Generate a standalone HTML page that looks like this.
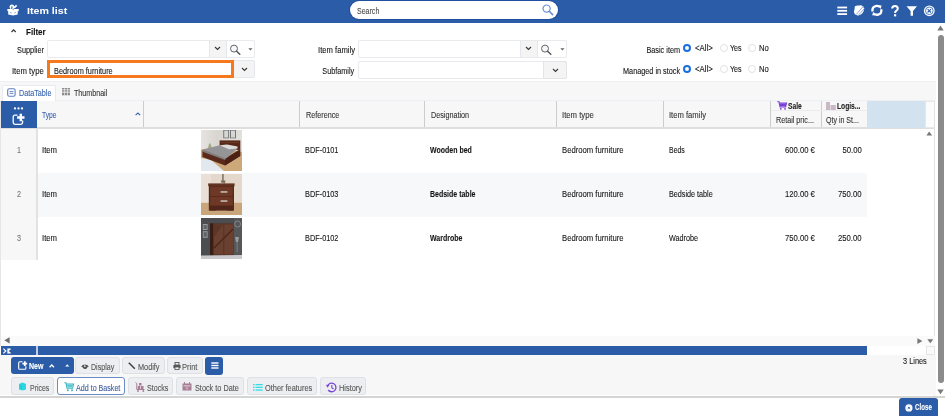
<!DOCTYPE html>
<html><head><meta charset="utf-8">
<style>
*{margin:0;padding:0;box-sizing:border-box}
html,body{width:945px;height:416px;overflow:hidden;background:#fff;font-family:"Liberation Sans",sans-serif;font-size:8.7px;color:#151515}
.a{position:absolute}
svg{position:absolute;overflow:visible}
.t{position:absolute;white-space:nowrap;line-height:10px;-webkit-text-stroke-width:.1px;transform:scaleX(.83);transform-origin:0 50%}
.r{position:absolute;white-space:nowrap;line-height:10px;-webkit-text-stroke-width:.1px;transform:scaleX(.83);transform-origin:100% 50%;text-align:right}
.b{font-weight:bold}
.inp{position:absolute;background:#fff;border:1px solid #e8eaee;border-radius:2px}
.ddb{position:absolute;background:#f4f4f4;border-left:1px solid #e4e7eb}
.radio{position:absolute;width:8px;height:8px;border-radius:50%;border:1px solid #dfe2e6;background:#fff}
.radio.on{border:2px solid #1a6fe0}
.sep{position:absolute;top:101px;width:1px;height:26px;background:#cdcdcd}
.btn{position:absolute;background:#eceef1;border:1px solid #dde0e4;border-radius:3px}
.blue{background:#2a5ca8}
</style></head><body>
<!-- ================= HEADER ================= -->
<div class="a blue" style="left:0;top:0;width:945px;height:23px"></div>
<svg style="left:0;top:0" width="22" height="22" viewBox="0 0 22 22">
 <path d="M10.9 8.6 Q9.4 5.6 11.9 5.4 Q13.9 5.4 13.2 8 Q15.2 7.4 16.6 5.3" fill="none" stroke="#fff" stroke-width="1.6"/>
 <path d="M7.3 9 L12.4 8.9 L13.1 9.9 L13.8 8.9 L18.8 9 L18.6 11.2 L7.5 11.2 Z" fill="#fff"/>
 <path d="M8.2 11 L17.7 11 L17.7 14.6 L13 15.5 L8.2 14.6 Z" fill="#fff"/>
 <path d="M10.2 12.6 L11.4 12.9 M14.6 12.9 L15.8 12.6" stroke="#2a5ca8" stroke-width=".7"/>
</svg>
<div class="a b" style="left:26.6px;top:4.5px;font-size:9.6px;line-height:12px;color:#fff;white-space:nowrap;transform:scaleX(1.11);transform-origin:0 50%">Item list</div>
<div class="a" style="left:350px;top:1px;width:208px;height:18px;background:#fff;border-radius:9px;box-shadow:0 0 0 1px #1f4f9e"></div>
<div class="t" style="transform:scaleX(0.81);left:356.5px;top:5.7px;color:#4a4a4a">Search</div>
<svg style="left:542px;top:4px" width="12" height="12" viewBox="0 0 12 12">
 <circle cx="4.6" cy="4.6" r="3.6" fill="none" stroke="#6a8fcf" stroke-width="1.2"/>
 <path d="M7.3 7.3 L10.6 10.6" stroke="#6a8fcf" stroke-width="1.6" stroke-linecap="round"/>
</svg>
<!-- header icons -->
<svg style="left:837px;top:6px" width="11" height="10" viewBox="0 0 11 10">
 <rect x="0.3" y="0.6" width="9.8" height="1.8" fill="#fff"/><rect x="0.3" y="3.9" width="9.8" height="1.8" fill="#fff"/><rect x="0.3" y="7.2" width="9.8" height="1.8" fill="#fff"/>
</svg>
<svg style="left:850px;top:0" width="36" height="22" viewBox="850 0 36 22">
 <ellipse cx="859" cy="10.4" rx="4.4" ry="5.6" transform="rotate(45 859 10.4)" fill="#fff"/>
 <ellipse cx="857.6" cy="8" rx="3" ry="2.4" fill="#fff"/>
 <path d="M856 14.6 L863.6 6 M858.2 15.4 L864.6 8.4" stroke="#7f9fd4" stroke-width=".9"/>
 <path d="M872.6 11.6 Q871.6 7.2 875.6 6.1 Q878.4 5.4 880 7.2" fill="none" stroke="#fff" stroke-width="2.3"/>
 <path d="M878.4 5.2 L881.6 5.6 L880.6 9 Z" fill="#fff"/>
 <path d="M881.2 9.2 Q882.2 13.6 878.2 14.6 Q875.2 15.2 873.8 13.4" fill="none" stroke="#fff" stroke-width="2.3"/>
 <path d="M875.4 15.6 L872.2 15.2 L873.2 11.8 Z" fill="#fff"/>
</svg>
<svg style="left:890.5px;top:5px" width="8" height="12" viewBox="0 0 8 12">
 <path d="M1.2 3.6 Q1.2 0.9 4 0.9 Q6.8 0.9 6.8 3.4 Q6.8 4.9 5.2 5.8 Q4.1 6.5 4.1 8" fill="none" stroke="#fff" stroke-width="2"/>
 <rect x="3" y="9.2" width="2.2" height="2.2" fill="#fff"/>
</svg>
<svg style="left:906px;top:6px" width="12" height="10" viewBox="0 0 12 10">
 <path d="M0.5 0.3 L11 0.3 L7 5 L7 9.8 L4.6 9.8 L4.6 5 Z" fill="#fff"/>
</svg>
<svg style="left:923px;top:5px" width="13" height="12" viewBox="0 0 13 12">
 <circle cx="6.3" cy="5.8" r="5.4" fill="#fff"/>
 <circle cx="6.3" cy="5.8" r="3.8" fill="none" stroke="#2a5ca8" stroke-width=".8"/>
 <path d="M4.6 4.1 L8 7.5 M8 4.1 L4.6 7.5" stroke="#2a5ca8" stroke-width="1.1"/>
</svg>

<!-- ================= FILTER ================= -->
<svg style="left:11px;top:29px" width="6" height="4" viewBox="0 0 6 4"><path d="M0.5 3 L2.6 0.8 L4.7 3" fill="none" stroke="#333" stroke-width="1.2"/></svg>
<div class="t b" style="transform:scaleX(0.93);left:26.3px;top:26.8px">Filter</div>

<div class="r" style="transform:scaleX(0.84);right:901.2px;top:45px">Supplier</div>
<div class="inp" style="left:47px;top:40px;width:208px;height:18px"></div>
<div class="ddb" style="left:209px;top:41px;width:17px;height:16px"></div>
<div class="a" style="left:226px;top:41px;width:1px;height:16px;background:#e4e7eb"></div>
<svg style="left:214px;top:46px" width="7" height="5" viewBox="0 0 7 5"><path d="M1 1 L3.5 3.5 L6 1" fill="none" stroke="#3a3a3a" stroke-width="1.15"/></svg>
<svg style="left:229px;top:44px" width="13" height="12" viewBox="0 0 13 12"><circle cx="5" cy="4.6" r="3.5" fill="#f4f7fb" stroke="#555" stroke-width=".9"/><path d="M7.6 7.3 L10.8 10.3" stroke="#555" stroke-width="1.5" stroke-linecap="round"/></svg>
<svg style="left:248px;top:48px" width="5" height="3" viewBox="0 0 5 3"><path d="M0.3 0.3 L4.5 0.3 L2.4 2.4 Z" fill="#666"/></svg>

<div class="r" style="transform:scaleX(0.89);right:901.2px;top:66px">Item type</div>
<div class="a" style="left:47px;top:60px;width:187px;height:18px;border:3px solid #f6791e;background:#fff"></div>
<div class="t" style="transform:scaleX(0.844);left:53.8px;top:65.9px">Bedroom furniture</div>
<div class="a" style="left:234px;top:60px;width:21px;height:18px;background:#f4f4f4;border:1px solid #e4e7eb;border-left:none;border-radius:0 2px 2px 0"></div>
<svg style="left:241px;top:67px" width="7" height="5" viewBox="0 0 7 5"><path d="M1 1 L3.5 3.5 L6 1" fill="none" stroke="#3a3a3a" stroke-width="1.15"/></svg>

<div class="r" style="transform:scaleX(0.88);right:590.4px;top:45px">Item family</div>
<div class="inp" style="left:358px;top:40px;width:208.5px;height:18px"></div>
<div class="ddb" style="left:520px;top:41px;width:17px;height:16px"></div>
<div class="a" style="left:537px;top:41px;width:1px;height:16px;background:#e4e7eb"></div>
<svg style="left:525px;top:46px" width="7" height="5" viewBox="0 0 7 5"><path d="M1 1 L3.5 3.5 L6 1" fill="none" stroke="#3a3a3a" stroke-width="1.15"/></svg>
<svg style="left:540px;top:44px" width="13" height="12" viewBox="0 0 13 12"><circle cx="5" cy="4.6" r="3.5" fill="#f4f7fb" stroke="#555" stroke-width=".9"/><path d="M7.6 7.3 L10.8 10.3" stroke="#555" stroke-width="1.5" stroke-linecap="round"/></svg>
<svg style="left:559.5px;top:48px" width="5" height="3" viewBox="0 0 5 3"><path d="M0.3 0.3 L4.5 0.3 L2.4 2.4 Z" fill="#666"/></svg>

<div class="r" style="transform:scaleX(0.834);right:590.4px;top:66px">Subfamily</div>
<div class="inp" style="left:358px;top:61px;width:208.5px;height:17.5px"></div>
<div class="a" style="left:543px;top:61px;width:23.5px;height:17.5px;background:#f4f4f4;border:1px solid #e2e4e8;border-radius:0 2px 2px 0"></div>
<svg style="left:551.5px;top:67.5px" width="7" height="5" viewBox="0 0 7 5"><path d="M1 1 L3.5 3.5 L6 1" fill="none" stroke="#3a3a3a" stroke-width="1.15"/></svg>

<div class="r" style="transform:scaleX(0.84);right:264.9px;top:44.7px">Basic item</div>
<div class="radio on" style="left:683.2px;top:44.3px"></div>
<div class="t" style="transform:scaleX(0.9);left:694.6px;top:43.3px">&lt;All&gt;</div>
<div class="radio" style="left:719.5px;top:44.3px"></div>
<div class="t" style="transform:scaleX(0.82);left:730.3px;top:43.3px">Yes</div>
<div class="radio" style="left:748.4px;top:44.3px"></div>
<div class="t" style="transform:scaleX(0.88);left:759.4px;top:43.3px">No</div>

<div class="r" style="transform:scaleX(0.838);right:265px;top:65.6px">Managed in stock</div>
<div class="radio on" style="left:683.2px;top:65.3px"></div>
<div class="t" style="transform:scaleX(0.9);left:694.6px;top:64.3px">&lt;All&gt;</div>
<div class="radio" style="left:719.5px;top:65.3px"></div>
<div class="t" style="transform:scaleX(0.82);left:730.3px;top:64.3px">Yes</div>
<div class="radio" style="left:748.4px;top:65.3px"></div>
<div class="t" style="transform:scaleX(0.88);left:759.4px;top:64.3px">No</div>

<!-- ================= TAB BAR ================= -->
<div class="a" style="left:0;top:81px;width:936px;height:20px;background:#f7f7f7;border-top:1px solid #eef0f3"></div>
<div class="a" style="left:1px;top:100px;width:934px;height:1px;background:#eceff3"></div>
<div class="a" style="left:1.5px;top:85px;width:54px;height:16px;background:#fff;border:1px solid #e8eaee;border-bottom:none;border-radius:2px 2px 0 0"></div>
<svg style="left:7px;top:87.5px" width="9" height="9" viewBox="0 0 9 9"><rect x="0.7" y="0.7" width="7.4" height="7.6" rx="1.6" fill="none" stroke="#5b7fc0" stroke-width="1.1"/><path d="M2.5 3.6 H6.4 M2.5 5.4 H6.4" stroke="#5b7fc0" stroke-width=".9"/></svg>
<div class="t" style="transform:scaleX(0.83);left:18.6px;top:87.6px;color:#3762ae">DataTable</div>
<svg style="left:62px;top:88.3px" width="8" height="8" viewBox="0 0 8 8" fill="#8d8d8d"><rect x="0" y="0" width="2.3" height="1.5"/><rect x="2.85" y="0" width="2.3" height="1.5"/><rect x="5.7" y="0" width="2.3" height="1.5"/><rect x="0" y="2.2" width="2.3" height="1.5"/><rect x="2.85" y="2.2" width="2.3" height="1.5"/><rect x="5.7" y="2.2" width="2.3" height="1.5"/><rect x="0" y="4.6" width="2.3" height="2.7"/><rect x="2.85" y="4.6" width="2.3" height="2.7"/><rect x="5.7" y="4.6" width="2.3" height="2.7"/></svg>
<div class="t" style="transform:scaleX(0.82);left:73.8px;top:87.6px;color:#333">Thumbnail</div>

<!-- ================= TABLE ================= -->
<div class="a" style="left:0;top:101px;width:1px;height:245px;background:#e6e6e6"></div>
<div class="a" style="left:1px;top:101px;width:934px;height:27px;background:#f7f7f7"></div>
<div class="a" style="left:1px;top:127px;width:934px;height:2px;background:#dedede"></div>
<div class="a blue" style="left:1px;top:101px;width:36px;height:27px"></div>
<svg style="left:12px;top:106px" width="14" height="20" viewBox="0 0 14 20">
 <circle cx="3" cy="2.4" r="1.15" fill="#fff"/><circle cx="6.5" cy="2.4" r="1.15" fill="#fff"/><circle cx="10" cy="2.4" r="1.15" fill="#fff"/>
 <path d="M5.5 9.2 L3 9.2 Q1.2 9.2 1.2 11 L1.2 16.6 Q1.2 18.4 3 18.4 L8.8 18.4 Q10.6 18.4 10.6 16.6 L10.6 14.5" fill="none" stroke="#fff" stroke-width="1.3"/>
 <path d="M8.8 7.8 V15.2 M5.1 11.5 H12.5" stroke="#fff" stroke-width="2.4"/>
</svg>
<div class="sep" style="left:143px"></div>
<div class="sep" style="left:299px"></div>
<div class="sep" style="left:424px"></div>
<div class="sep" style="left:556px"></div>
<div class="sep" style="left:662.5px"></div>
<div class="sep" style="left:770px"></div>
<div class="sep" style="left:820.5px"></div>
<div class="a" style="left:771px;top:110px;width:96px;height:1px;background:#ececec"></div>
<div class="a" style="left:867px;top:101px;width:58px;height:26.5px;background:#d2e2ef"></div>
<div class="a" style="left:925px;top:101px;width:10px;height:27px;background:#fcfcfc;border:1px solid #e8e8e8"></div>

<div class="t" style="transform:scaleX(0.77);left:42.4px;top:110px;color:#3a62b2">Type</div>
<svg style="left:134.5px;top:112px" width="6" height="4" viewBox="0 0 6 4"><path d="M0.6 3.2 L2.9 1 L5.2 3.2" fill="none" stroke="#3a62b2" stroke-width="1.1"/></svg>
<div class="t" style="transform:scaleX(0.83);left:305.5px;top:110px;color:#333">Reference</div>
<div class="t" style="transform:scaleX(0.83);left:430.5px;top:110px;color:#333">Designation</div>
<div class="t" style="transform:scaleX(0.89);left:562px;top:110px;color:#333">Item type</div>
<div class="t" style="transform:scaleX(0.88);left:668.7px;top:110px;color:#333">Item family</div>
<svg style="left:776.5px;top:101px" width="10" height="9" viewBox="0 0 10 9"><path d="M0.3 0.8 L2 0.8 L3 6 L8.6 6 L9.6 2 L2.4 2" fill="none" stroke="#7a3fd8" stroke-width="1.1"/><rect x="3" y="2.4" width="6" height="3" fill="#7a3fd8"/><circle cx="3.8" cy="7.8" r="0.9" fill="#7a3fd8"/><circle cx="8" cy="7.8" r="0.9" fill="#7a3fd8"/></svg>
<div class="t b" style="transform:scaleX(0.77);left:787.8px;top:100.5px;color:#222">Sale</div>
<div class="t" style="transform:scaleX(0.827);left:775.5px;top:114.5px;color:#333">Retail pric...</div>
<svg style="left:825.5px;top:102px" width="10" height="8" viewBox="0 0 10 8" fill="#c9b9c6"><rect x="0" y="0" width="4" height="8"/><rect x="4.5" y="3" width="5.3" height="5"/></svg>
<div class="t b" style="transform:scaleX(0.77);left:837.3px;top:100.5px;color:#222">Logis...</div>
<div class="t" style="transform:scaleX(0.81);left:825.5px;top:114.5px;color:#333">Qty in St...</div>

<!-- rows -->
<div class="a" style="left:1px;top:129px;width:35px;height:131px;background:#f7f7f7"></div>
<div class="a" style="left:36px;top:129px;width:1.5px;height:131px;background:#e2e2e2"></div>
<div class="a" style="left:37.5px;top:172.5px;width:829.5px;height:44.3px;background:#f7f8fa"></div>

<div class="t" style="left:17px;top:145px;color:#777">1</div>
<div class="t" style="left:17px;top:188.5px;color:#777">2</div>
<div class="t" style="left:17px;top:232.5px;color:#777">3</div>

<div class="t" style="transform:scaleX(0.89);left:42.4px;top:145px">Item</div>
<div class="t" style="transform:scaleX(0.89);left:42.4px;top:188.5px">Item</div>
<div class="t" style="transform:scaleX(0.89);left:42.4px;top:232.5px">Item</div>

<div class="t" style="transform:scaleX(0.845);left:305.2px;top:145px">BDF-0101</div>
<div class="t" style="transform:scaleX(0.845);left:305.2px;top:188.5px">BDF-0103</div>
<div class="t" style="transform:scaleX(0.845);left:305.2px;top:232.5px">BDF-0102</div>

<div class="t b" style="transform:scaleX(0.805);left:430px;top:145px">Wooden bed</div>
<div class="t b" style="transform:scaleX(0.805);left:430px;top:188.5px">Bedside table</div>
<div class="t b" style="transform:scaleX(0.805);left:430px;top:232.5px">Wardrobe</div>

<div class="t" style="transform:scaleX(0.886);left:561.6px;top:145px">Bedroom furniture</div>
<div class="t" style="transform:scaleX(0.886);left:561.6px;top:188.5px">Bedroom furniture</div>
<div class="t" style="transform:scaleX(0.886);left:561.6px;top:232.5px">Bedroom furniture</div>

<div class="t" style="transform:scaleX(0.8);left:669px;top:145px">Beds</div>
<div class="t" style="transform:scaleX(0.83);left:669px;top:188.5px">Bedside table</div>
<div class="t" style="transform:scaleX(0.83);left:669px;top:232.5px">Wadrobe</div>

<div class="r" style="transform:scaleX(0.88);right:130.3px;top:145px">600.00 €</div>
<div class="r" style="transform:scaleX(0.88);right:130.3px;top:188.5px">120.00 €</div>
<div class="r" style="transform:scaleX(0.88);right:130.3px;top:232.5px">750.00 €</div>

<div class="r" style="transform:scaleX(0.89);right:83px;top:145px">50.00</div>
<div class="r" style="transform:scaleX(0.89);right:83px;top:188.5px">750.00</div>
<div class="r" style="transform:scaleX(0.89);right:83px;top:232.5px">250.00</div>

<!-- images -->
<svg style="left:201px;top:130px;filter:blur(.35px)" width="41" height="41" viewBox="0 0 41 41">
 <defs><linearGradient id="w1" x1="0" x2="1" y1="0" y2="0"><stop offset="0" stop-color="#e6e4e1"/><stop offset="0.4" stop-color="#d9d5d0"/><stop offset="1" stop-color="#e3e0dc"/></linearGradient></defs>
 <rect width="41" height="41" fill="url(#w1)"/>
 <path d="M0 19.5 L18 17 L41 22 L41 41 L0 41 Z" fill="#cda97a"/>
 <path d="M0 28 L10 30 L23 41 L0 41 Z" fill="#e2e8ee"/>
 <rect x="22.3" y="0" width="5.8" height="8.3" fill="#6e6e6e"/><rect x="23.2" y="0.6" width="4" height="7" fill="#d4d8d4"/>
 <rect x="29" y="0" width="6" height="8.3" fill="#6e6e6e"/><rect x="29.9" y="0.6" width="4.2" height="7" fill="#d4d8d4"/>
 <path d="M7 18 Q8.8 8.5 10.8 18 Z" fill="#a3a982"/>
 <rect x="18.6" y="10.4" width="20.7" height="9.5" fill="#572818"/>
 <rect x="20" y="12" width="18" height="1" fill="#6b3624"/>
 <path d="M1.4 20.5 L1.4 27 L24 35.5 L39.2 26 L39.2 19 L24 28.5 Z" fill="#5a2a1b"/>
 <path d="M24 29 L39.2 20.5 L39.2 26 L24 35.5 Z" fill="#4a2114"/>
 <path d="M2 19.5 L18.6 15.3 L36.5 18.5 L25 28.5 Z" fill="#959597"/>
 <path d="M2 19.5 L25 28.5 L24 30 L1.6 21.8 Z" fill="#7e7e80"/>
 <path d="M18.6 15.3 L26 14.6 L36.5 16.4 L36.5 18.5 L28 19.3 Z" fill="#dcdcdc"/>
</svg>
<svg style="left:201px;top:174px;filter:blur(.35px)" width="41" height="41" viewBox="0 0 41 41">
 <rect width="41" height="41" fill="#e4d8cd"/>
 <rect x="0" y="0" width="10" height="41" fill="#eae0d7"/>
 <path d="M0 28.8 L41 28.8 L41 41 L0 41 Z" fill="#c9a57c"/>
 <rect x="21" y="0" width="1.8" height="8" fill="#8e8070"/>
 <path d="M19.8 6.6 L24.6 6.6 L23.8 9.6 L20.6 9.6 Z" fill="#7c6c5c"/>
 <path d="M12 8.8 L22.8 8.8 L22 10.8 L12.8 10.8 Z" fill="#d9d9d6"/>
 <rect x="7.2" y="9.4" width="26.4" height="2.8" fill="#623223"/>
 <rect x="7.8" y="12" width="25.2" height="24.6" fill="#55291b"/>
 <rect x="9.2" y="12.8" width="22.6" height="9.2" fill="#6d3826"/>
 <rect x="9.2" y="22.8" width="22.6" height="9" fill="#6d3826"/>
 <path d="M9 31.8 L32 31.8 L32 36.6 L27 36.6 Q20.5 33.5 14 36.6 L9 36.6 Z" fill="#4f2619"/>
 <rect x="19.6" y="17.2" width="6.8" height="1.5" fill="#c9c3bb"/>
 <rect x="19.6" y="26.3" width="6.8" height="1.5" fill="#c9c3bb"/>
</svg>
<svg style="left:201px;top:218px;filter:blur(.35px)" width="41" height="41" viewBox="0 0 41 41">
 <rect width="41" height="41" fill="#4b4d51"/>
 <rect x="33" y="0" width="8" height="41" fill="#55575b"/>
 <rect x="1.8" y="6" width="4.8" height="6" fill="#9a9ca0"/><rect x="2.6" y="7" width="3.2" height="4" fill="#626468"/>
 <rect x="1.8" y="13.2" width="4.8" height="6.6" fill="#9a9ca0"/><rect x="2.6" y="14.2" width="3.2" height="4.6" fill="#626468"/>
 <circle cx="36.6" cy="6" r="3" fill="none" stroke="#8a8a8c" stroke-width="0.9"/>
 <path d="M34 19 L38 19 L37 24 L35 24 Z" fill="#9a9a9c"/><rect x="35.7" y="24" width=".8" height="10" fill="#8a8a8c"/>
 <rect x="9" y="5.4" width="24" height="31.8" fill="#573224"/>
 <rect x="9" y="5.4" width="3.4" height="31.8" fill="#3a1d14"/>
 <rect x="12.6" y="6.4" width="20" height="30" fill="#6a4030"/>
 <path d="M12.6 6.4 L22 6.4 L12.6 20 Z" fill="#5e3628"/>
 <path d="M13 30 L32 11" stroke="#4a2418" stroke-width="1.2"/>
 <rect x="22.5" y="6.4" width="0.7" height="30" fill="#54291c"/>
 <path d="M0 37.5 L41 37 L41 41 L0 41 Z" fill="#c9c9cb"/>
</svg>

<!-- inner v-scroll up arrow -->
<svg style="left:926px;top:131px" width="7" height="5" viewBox="0 0 7 5"><path d="M0.4 4.4 L3.2 0.4 L6.2 4.4 Z" fill="#777"/></svg>
<div class="a" style="left:934px;top:101px;width:1px;height:295px;background:#e3e3e3"></div>

<!-- h-scroll -->
<div class="a" style="left:1px;top:336px;width:934px;height:10px;background:#fafafa"></div>
<svg style="left:3.6px;top:337.4px" width="6" height="7" viewBox="0 0 6 7"><path d="M5.6 0.2 L0.3 3.3 L5.6 6.4 Z" fill="#6e6e6e"/></svg>
<svg style="left:916.5px;top:337.8px" width="6" height="7" viewBox="0 0 6 7"><path d="M0.4 0.3 L5.4 3.1 L0.4 6 Z" fill="#777"/></svg>
<svg style="left:926.5px;top:338.5px" width="7" height="5" viewBox="0 0 7 5"><path d="M0.3 0.3 L6.3 0.3 L3.3 4.2 Z" fill="#777"/></svg>
<div class="a blue" style="left:1px;top:346px;width:866px;height:8.5px"></div>
<div class="a" style="left:36px;top:346px;width:1.5px;height:8.5px;background:#c0cde0"></div>
<svg style="left:2.5px;top:347.8px" width="8" height="6" viewBox="0 0 8 6"><path d="M0.4 0.6 L2.8 3 L0.4 5.4" fill="none" stroke="#fff" stroke-width="1.2"/><path d="M7.6 0.8 L4.6 3 L7.6 5.2 M4.2 1.1 H7.4 M4.2 4.9 H7.4" fill="none" stroke="#fff" stroke-width="1.1"/></svg>
<div class="a" style="left:926px;top:346px;width:9px;height:8.5px;background:#fafafa;border:1px solid #e6e6e6"></div>

<!-- ================= BUTTON AREA ================= -->
<div class="a" style="left:0;top:354.5px;width:936px;height:40.5px;background:#f7f7f7"></div>
<div class="a" style="left:0;top:396px;width:945px;height:1.5px;background:#d4d4d4"></div>
<div class="t" style="transform:scaleX(0.85);left:902.6px;top:356.3px;color:#222">3 Lines</div>

<div class="a blue" style="left:11.2px;top:357.2px;width:62.6px;height:17.1px;border-radius:3px"></div>
<svg style="left:17.5px;top:360.5px" width="10" height="9" viewBox="0 0 10 9">
 <path d="M4.5 0.8 H1.8 Q0.7 0.8 0.7 1.9 V7.2 Q0.7 8.3 1.8 8.3 H6.8 Q7.9 8.3 7.9 7.2 V5.2" fill="none" stroke="#fff" stroke-width="1.1"/>
 <path d="M6.8 0.3 V5 M4.4 2.6 H9.2" stroke="#fff" stroke-width="1.8"/>
</svg>
<div class="t b" style="transform:scaleX(0.81);left:28.8px;top:360.6px;color:#fff">New</div>
<svg style="left:48.7px;top:364px" width="6" height="4" viewBox="0 0 6 4"><path d="M0.6 3.2 L2.8 1 L5 3.2" fill="none" stroke="#fff" stroke-width="1.3"/></svg>
<svg style="left:64.9px;top:363.8px" width="5" height="3" viewBox="0 0 5 3"><path d="M0.2 2.6 L2.2 0.3 L4.3 2.6 Z" fill="#fff"/></svg>

<div class="btn" style="left:75px;top:357.3px;width:44.5px;height:17.2px"></div>
<svg style="left:80.8px;top:363.5px" width="8" height="6" viewBox="0 0 8 6"><path d="M0.2 2.6 Q1.5 0.4 4 0.4 Q6.6 0.4 7.8 2.6 Q6.2 3.2 5.6 4.6 Q4 5.6 2.6 4.6 Q1.6 3.2 0.2 2.6 Z" fill="#555"/><circle cx="3.8" cy="2.2" r="0.9" fill="#d8d8d8"/></svg>
<div class="t" style="transform:scaleX(0.816);left:90.7px;top:361.9px;color:#555">Display</div>

<div class="btn" style="left:122.3px;top:357.3px;width:42.3px;height:17.2px"></div>
<svg style="left:128px;top:361.5px" width="8" height="8" viewBox="0 0 8 8"><path d="M0.8 0.8 L6.8 6.8" stroke="#444" stroke-width="1.6"/></svg>
<div class="t" style="transform:scaleX(0.84);left:137.8px;top:361.9px;color:#555">Modify</div>

<div class="btn" style="left:167.2px;top:357.3px;width:35.5px;height:17.2px"></div>
<svg style="left:172.5px;top:361.5px" width="8" height="8" viewBox="0 0 8 8"><rect x="2" y="0.5" width="4" height="2.5" fill="none" stroke="#555" stroke-width=".9"/><rect x="0.4" y="3" width="7.2" height="3.2" rx=".6" fill="#555"/><rect x="2" y="5" width="4" height="2.6" fill="#eceef1" stroke="#555" stroke-width=".8"/></svg>
<div class="t" style="transform:scaleX(0.865);left:182px;top:361.9px;color:#555">Print</div>

<div class="a blue" style="left:205.1px;top:356.8px;width:18.4px;height:17.8px;border-radius:3px"></div>
<svg style="left:210.5px;top:362px" width="8" height="7" viewBox="0 0 8 7" fill="#fff"><rect x="0.3" y="0.3" width="7.2" height="1.4"/><rect x="0.3" y="2.8" width="7.2" height="1.4"/><rect x="0.3" y="5.3" width="7.2" height="1.4"/></svg>

<div class="btn" style="left:11.2px;top:377.2px;width:43.1px;height:17.8px"></div>
<svg style="left:18px;top:382px" width="9" height="9" viewBox="0 0 9 9"><path d="M1 2 L4.5 0.6 L8 2 L8 7.6 L4.5 8.6 L1 7.6 Z" fill="#2ad6e0"/><path d="M3.2 3.6 V6.6" stroke="#1bb7c4" stroke-width=".8"/></svg>
<div class="t" style="transform:scaleX(0.8);left:29.8px;top:382.8px;color:#555">Prices</div>

<div class="a" style="left:56.9px;top:377.2px;width:68.6px;height:17.8px;background:#fff;border:1.3px solid #6a8bc6;border-radius:3px"></div>
<svg style="left:63.5px;top:381.5px" width="10" height="10" viewBox="0 0 10 10"><path d="M0.3 0.8 L2 0.8 L3 6.3 L8.6 6.3 L9.6 2 L2.3 2" fill="none" stroke="#3fb4c0" stroke-width="1.1"/><path d="M3 2.4 L9 2.4 L8.3 5.6 L3.5 5.6 Z" fill="#5ec8d0"/><circle cx="3.9" cy="8.3" r="1" fill="#3fb4c0"/><circle cx="8" cy="8.3" r="1" fill="#3fb4c0"/></svg>
<div class="t" style="transform:scaleX(0.82);left:75.9px;top:382.8px;color:#3a5c9e">Add to Basket</div>

<div class="btn" style="left:128.2px;top:377.2px;width:45.1px;height:17.8px"></div>
<svg style="left:134.5px;top:381.5px" width="10" height="10" viewBox="0 0 10 10"><path d="M0.5 0.5 L1.8 1.5 L1.8 7.5 L9.5 7.5" fill="none" stroke="#a87d96" stroke-width="1"/><rect x="4" y="1" width="2.5" height="2.5" fill="#a87d96"/><rect x="2.8" y="4" width="2.5" height="3" fill="#a87d96"/><rect x="6" y="4" width="2.5" height="3" fill="#a87d96"/><circle cx="3" cy="9" r=".9" fill="#a87d96"/><circle cx="8.3" cy="9" r=".9" fill="#a87d96"/></svg>
<div class="t" style="transform:scaleX(0.82);left:146.8px;top:382.8px;color:#555">Stocks</div>

<div class="btn" style="left:176px;top:377.2px;width:68.1px;height:17.8px"></div>
<svg style="left:182px;top:382px" width="10" height="9" viewBox="0 0 10 9"><rect x="0.5" y="1.5" width="9" height="7" fill="#a87d96"/><rect x="1.6" y="3.5" width="6.8" height="0.8" fill="#eceef1"/><rect x="2" y="0" width="1" height="2" fill="#a87d96"/><rect x="7" y="0" width="1" height="2" fill="#a87d96"/><circle cx="5" cy="6.2" r="1.3" fill="#c9a7bb"/></svg>
<div class="t" style="transform:scaleX(0.84);left:194.8px;top:382.8px;color:#555">Stock to Date</div>

<div class="btn" style="left:246.5px;top:377.2px;width:70.7px;height:17.8px"></div>
<svg style="left:253px;top:383.5px" width="10" height="7" viewBox="0 0 10 7" fill="#33dde6"><rect x="0" y="0" width="1.6" height="1.3"/><rect x="2.5" y="0" width="7.2" height="1.3"/><rect x="0" y="2.7" width="1.6" height="1.3"/><rect x="2.5" y="2.7" width="7.2" height="1.3"/><rect x="0" y="5.4" width="1.6" height="1.3"/><rect x="2.5" y="5.4" width="7.2" height="1.3"/></svg>
<div class="t" style="transform:scaleX(0.85);left:264.9px;top:382.8px;color:#555">Other features</div>

<div class="btn" style="left:320.3px;top:377.2px;width:46.1px;height:17.8px"></div>
<svg style="left:326px;top:381.5px" width="11" height="11" viewBox="0 0 11 11"><path d="M1.6 4 A4.3 4.3 0 1 1 2.2 8" fill="none" stroke="#7b45d6" stroke-width="1.3"/><path d="M0 2.8 L3.4 3 L1.4 5.7 Z" fill="#7b45d6"/><path d="M5.8 3 V5.8 L7.6 7" fill="none" stroke="#7b45d6" stroke-width="1.1"/></svg>
<div class="t" style="transform:scaleX(0.85);left:338.6px;top:382.8px;color:#555">History</div>

<!-- ================= CLOSE ================= -->
<div class="a blue" style="left:899.3px;top:398px;width:38.7px;height:18px;border-radius:3px 3px 0 0"></div>
<svg style="left:904.6px;top:403.6px" width="8" height="8" viewBox="0 0 8 8"><circle cx="3.9" cy="3.9" r="3.6" fill="#fff"/><circle cx="3.9" cy="3.9" r="2.3" fill="none" stroke="#dfe6f2" stroke-width=".6"/><path d="M3 3 L4.8 4.8 M4.8 3 L3 4.8" stroke="#2a5ca8" stroke-width=".9"/></svg>
<div class="t b" style="transform:scaleX(0.755);left:915px;top:402.6px;color:#fff;font-size:8.2px">Close</div>

<!-- ================= PAGE SCROLLBAR ================= -->
<svg style="left:937.2px;top:25.4px" width="7" height="6" viewBox="0 0 7 6"><path d="M0.3 5.4 L3.5 0.4 L6.7 5.4 Z" fill="#777"/></svg>
<div class="a" style="left:937.5px;top:35px;width:6.3px;height:348px;background:#8b8b8b;border-radius:3.2px"></div>
<svg style="left:937.2px;top:389px" width="7" height="6" viewBox="0 0 7 6"><path d="M0.3 0.4 L6.7 0.4 L3.5 5.2 Z" fill="#777"/></svg>
</body></html>
